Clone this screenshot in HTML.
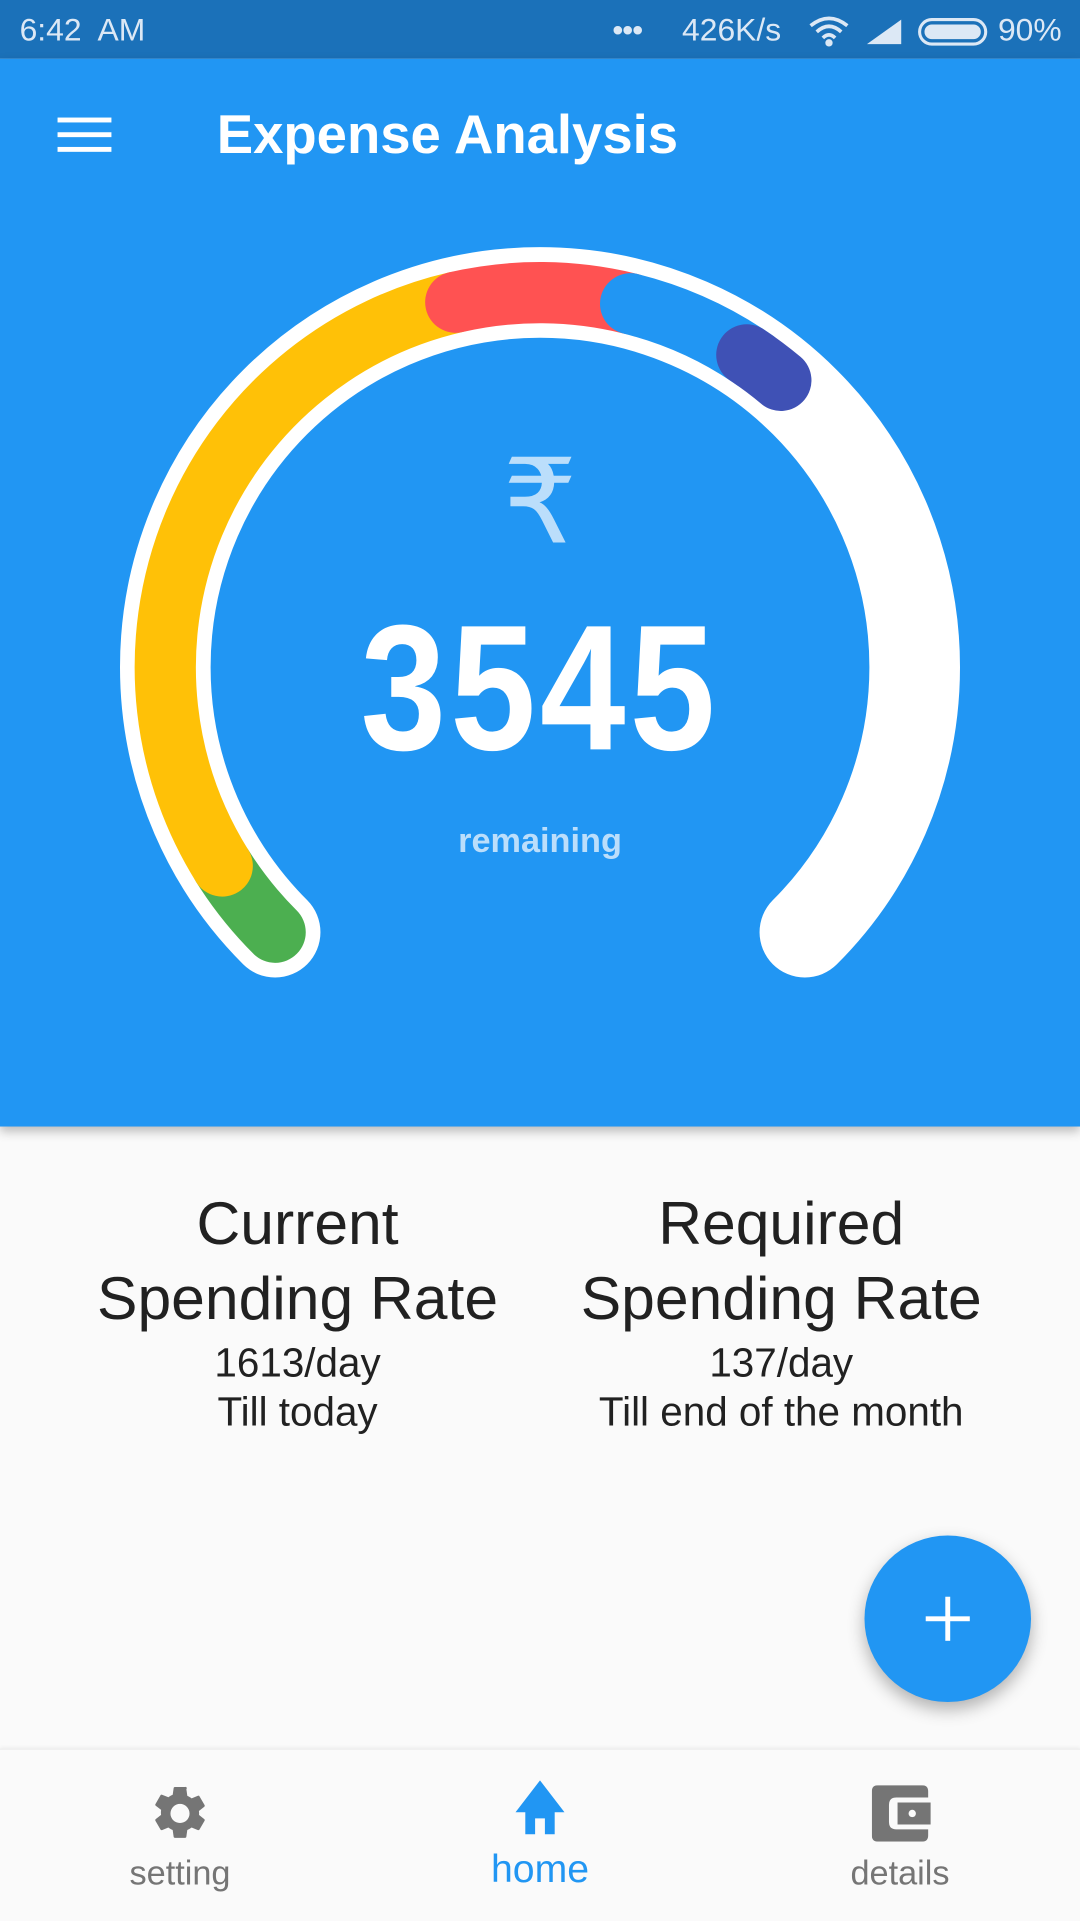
<!DOCTYPE html>
<html><head><meta charset="utf-8">
<style>
html,body{margin:0;padding:0;width:1080px;height:1920px;overflow:hidden;background:#fafafa;font-family:"Liberation Sans",sans-serif;}
#w{position:absolute;left:0;top:0;width:882px;height:1568px;transform:scale(1.2244898);transform-origin:0 0;background:#fafafa;}
.abs{position:absolute;}
.c{text-align:center;color:#212121;}
</style></head><body><div id="w">
<div class="abs" style="left:0;top:0;width:882px;height:48px;background:#1b71b9;"></div>
<div class="abs" style="left:16px;top:9px;font-size:26px;color:#dce8f5;">6:42&nbsp; AM</div>
<div class="abs" style="left:500px;top:9px;font-size:26px;color:#dce8f5;letter-spacing:-1px;">•••</div>
<div class="abs" style="left:557px;top:9px;font-size:26px;color:#dce8f5;">426K/s</div>
<svg class="abs" style="left:660px;top:12px" width="220" height="28" viewBox="0 0 220 28">
<path d="M2 9 Q17 -3 32 9 M7 14 Q17 5 27 14 M12 19 Q17 14 22 19" stroke="#dce8f5" stroke-width="3" fill="none"/>
<circle cx="17" cy="23" r="3" fill="#dce8f5"/>
<path d="M48 24 L76 24 L76 4 Z" fill="#dce8f5"/>
<rect x="91" y="4" width="54" height="20" rx="10" fill="none" stroke="#dce8f5" stroke-width="2.5"/>
<rect x="95" y="8" width="46" height="12" rx="6" fill="#dce8f5"/>
</svg>
<div class="abs" style="left:815px;top:9px;font-size:26px;color:#dce8f5;">90%</div>

<div class="abs" style="left:0;top:48px;width:882px;height:872px;background:#2196f3;box-shadow:0 4px 8px rgba(0,0,0,0.25);"></div>
<div class="abs" style="left:47px;top:96px;width:44px;height:4px;background:#fff;box-shadow:0 12px 0 #fff,0 24px 0 #fff;"></div>
<div class="abs" style="left:177px;top:86px;font-size:44.5px;font-weight:bold;color:#fff;">Expense Analysis</div>

<svg class="abs" style="left:0;top:0" width="882" height="920" viewBox="0 0 882 920">
<path d="M224.7 761.3 A306 306 0 1 1 657.3 761.3" stroke="#fff" stroke-width="74" fill="none" stroke-linecap="round"/>
<g fill="none" stroke-width="50" stroke-linecap="round">
<path d="M224.7 761.3 A306 306 0 0 1 181.5 707.2" stroke="#4caf50"/>
<path d="M181.5 707.2 A306 306 0 0 1 372.2 246.8" stroke="#ffc107"/>
<path d="M372.2 246.8 A306 306 0 0 1 515 248.1" stroke="#ff5252"/>
<path d="M515 248.1 A306 306 0 0 1 616.5 294.3" stroke="#2196f3"/>
<path d="M609.9 289.8 A306 306 0 0 1 637.7 310.6" stroke="#3f51b5"/>
</g>
<text x="441" y="443" text-anchor="middle" font-size="96" fill="#bbdefb" font-family="Liberation Sans, DejaVu Sans, sans-serif">₹</text>
<text x="441" y="612" text-anchor="middle" font-size="146" font-weight="bold" fill="#fff" font-family="Liberation Sans, sans-serif" transform="translate(441 0) scale(0.86 1) translate(-441 0)" letter-spacing="4">3545</text>
<text x="441" y="696" text-anchor="middle" font-size="28" font-weight="bold" fill="#bbdefb" font-family="Liberation Sans, sans-serif">remaining</text>
</svg>

<div class="abs c" style="left:43px;width:400px;top:969px;font-size:49.5px;line-height:61px;">Current<br>Spending Rate</div>
<div class="abs c" style="left:43px;width:400px;top:1093px;font-size:33px;line-height:40px;">1613/day<br>Till today</div>
<div class="abs c" style="left:438px;width:400px;top:969px;font-size:49.5px;line-height:61px;">Required<br>Spending Rate</div>
<div class="abs c" style="left:438px;width:400px;top:1093px;font-size:33px;line-height:40px;">137/day<br>Till end of the month</div>

<div class="abs" style="left:706px;top:1254px;width:136px;height:136px;border-radius:50%;background:#2196f3;box-shadow:0 6px 14px rgba(0,0,0,0.3);"></div>
<div class="abs" style="left:756px;top:1320px;width:36px;height:4px;background:#fff;"></div>
<div class="abs" style="left:772px;top:1304px;width:4px;height:36px;background:#fff;"></div>

<div class="abs" style="left:0;top:1428px;width:882px;height:140px;background:#fafafa;border-top:1px solid #eee;box-shadow:0 -1px 3px rgba(0,0,0,0.06);"></div>
<svg class="abs" style="left:121px;top:1455px" width="52" height="52" viewBox="0 0 24 24"><path fill="#757575" d="M19.14 12.94c.04-.3.06-.61.06-.94s-.02-.64-.07-.94l2.03-1.58a.49.49 0 0 0 .12-.61l-1.920-3.32a.49.49 0 0 0-.59-.22l-2.39.96c-.5-.38-1.03-.7-1.62-.94l-.36-2.54A.48.48 0 0 0 13.92 2h-3.84c-.24 0-.43.17-.47.41l-.36 2.54c-.59.24-1.13.57-1.62.94l-2.39-.96a.48.48 0 0 0-.59.22L2.74 8.47c-.12.21-.08.47.12.61l2.03 1.58c-.05.3-.09.63-.09.94s.02.64.07.94l-2.03 1.58a.49.49 0 0 0-.12.61l1.92 3.32c.12.22.37.29.59.22l2.39-.96c.5.38 1.030.7 1.62.94l.36 2.54c.05.24.24.41.48.41h3.84c.24 0 .44-.17.47-.41l.36-2.54c.59-.24 1.13-.56 1.62-.94l2.39.96c.22.08.47 0 .59-.22l1.92-3.32c.12-.22.07-.47-.12-.61l-2.01-1.58zM12 15.6A3.6 3.6 0 1 1 12 8.4a3.6 3.6 0 0 1 0 7.2z"/></svg>
<svg class="abs" style="left:415px;top:1452px" width="52" height="48" viewBox="0 0 52 48"><path fill="#2196f3" d="M26 2 L46 28 L38 28 L38 46 L30 46 L30 33 L22 33 L22 46 L14 46 L14 28 L6 28 Z"/></svg>
<svg class="abs" style="left:712px;top:1458px" width="50" height="46" viewBox="0 0 50 46"><path fill="#757575" d="M5 0 H41 Q46 0 46 5 V10 H20 Q14 10 14 16 V30 Q14 36 20 36 H46 V41 Q46 46 41 46 H5 Q0 46 0 41 V5 Q0 0 5 0 Z M21 14 H48 V32 H21 Z"/><circle cx="33" cy="23" r="3" fill="#fafafa"/></svg>
<div class="abs" style="left:47px;width:200px;top:1514px;text-align:center;font-size:28px;color:#757575;">setting</div>
<div class="abs" style="left:341px;width:200px;top:1508px;text-align:center;font-size:32px;color:#2196f3;">home</div>
<div class="abs" style="left:635px;width:200px;top:1514px;text-align:center;font-size:28px;color:#757575;">details</div>
</div></body></html>
